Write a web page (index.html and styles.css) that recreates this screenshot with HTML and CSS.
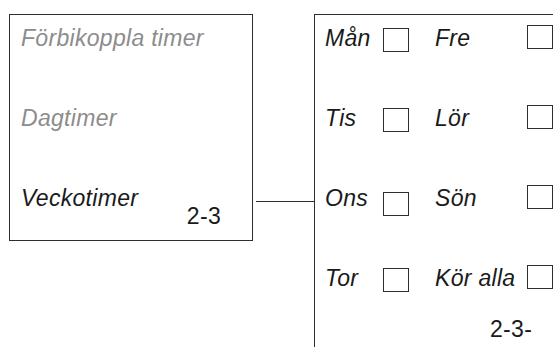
FILE: index.html
```html
<!DOCTYPE html>
<html>
<head>
<meta http-equiv="Content-Type" content="text/html; charset=utf-8"/>
<title>Veckotimer</title>
<link rel="stylesheet" href="styles.css">
</head>
<body>
<div class="page">

  <div class="menu">
    <div class="menu-item dim">Förbikoppla timer</div>
    <div class="menu-item dim">Dagtimer</div>
    <div class="menu-item menu-last">
      <span>Veckotimer</span>
      <span class="ref">2-3</span>
    </div>
  </div>

  <div class="link"></div>

  <div class="week">
    <div class="days">
      <div class="day-row">
        <div class="pair"><span class="day">Mån</span><span class="box"></span></div>
        <div class="pair pair-right"><span class="day">Fre</span><span class="box"></span></div>
      </div>
      <div class="day-row">
        <div class="pair"><span class="day">Tis</span><span class="box"></span></div>
        <div class="pair pair-right"><span class="day">Lör</span><span class="box"></span></div>
      </div>
      <div class="day-row">
        <div class="pair"><span class="day">Ons</span><span class="box box-low"></span></div>
        <div class="pair pair-right"><span class="day">Sön</span><span class="box"></span></div>
      </div>
      <div class="day-row">
        <div class="pair"><span class="day">Tor</span><span class="box"></span></div>
        <div class="pair pair-right"><span class="day">Kör alla</span><span class="box"></span></div>
      </div>
    </div>
    <div class="ref week-ref">2-3-</div>
  </div>

</div>
</body>
</html>
```

FILE: styles.css
```css
html, body {
  margin: 0;
  height: 100%;
  overflow: hidden;
  background-color: white;
}

body {
  font-family: "Liberation Sans", Arial, sans-serif;
  font-size: 23px;
  letter-spacing: 0.3px;
  color: #1a1a1a;
}

.page {
  display: flex;
  align-items: flex-start;
  padding: 14px 0 0 9px;
}

/* left menu box */
.menu {
  box-sizing: border-box;
  width: 244px;
  height: 227px;
  border: 1px solid #2e2e2e;
  padding: 10px 0 0 11px;
  display: grid;
  grid-template-rows: 80px 80px auto;
}

.menu-item {
  font-style: italic;
  line-height: 26px;
}

.dim {
  color: #8c8c8c;
}

.menu-last {
  display: flex;
  justify-content: space-between;
  padding-right: 31px;
}

.ref {
  font-style: normal;
  line-height: 26px;
}

.menu-last .ref {
  padding-top: 18px;
}

/* connector line */
.link {
  width: 58px;
  margin: 187px 0 0 3px;
  border-top: 1px solid #2e2e2e;
}

/* week panel */
.week {
  box-sizing: border-box;
  flex: 1;
  height: 333px;
  border-top: 1px solid #2e2e2e;
  border-left: 1px solid #2e2e2e;
  padding: 10px 0 0 10px;
}

.days {
  display: grid;
  grid-template-rows: 80px 80px 80px auto;
}

.day-row {
  display: flex;
  align-items: flex-start;
}

.pair {
  display: flex;
  align-items: flex-start;
  width: 84px;
}

.pair-right {
  width: 118px;
  margin-left: 26px;
}

.day {
  flex: 1;
  font-style: italic;
  line-height: 26px;
  white-space: nowrap;
}

.box {
  box-sizing: border-box;
  width: 26px;
  height: 24px;
  margin-top: 3px;
  border: 1px solid #2e2e2e;
}

.pair-right .box {
  margin-top: 0;
}

.box-low {
  margin-top: 7px;
}

.week-ref {
  margin-top: 24px;
  padding-left: 165px;
}
```
